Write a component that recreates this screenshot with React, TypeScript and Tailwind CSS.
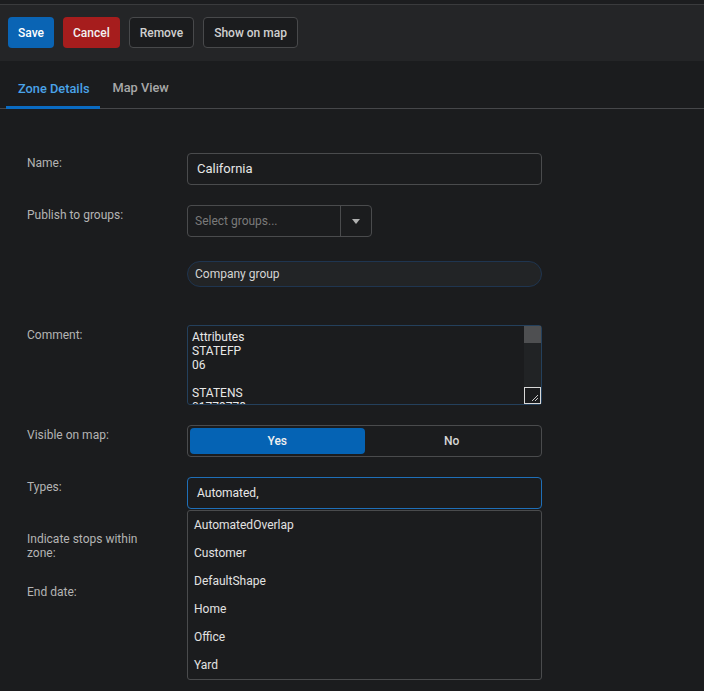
import React from "react";

const types = ["AutomatedOverlap", "Customer", "DefaultShape", "Home", "Office", "Yard"];

function Label({ children }: { children: React.ReactNode }) {
  return (
    <div className="w-[160px] shrink-0 pt-[3px] pr-6 text-[12px] leading-[14px] text-[#b4b4b4]">
      {children}
    </div>
  );
}

export default function App() {
  return (
    <div
      className="min-h-[691px] w-[704px] overflow-hidden bg-[#1b1c1e] text-[#e2e2e2]"
      style={{ fontFamily: "Roboto, 'Liberation Sans', sans-serif" }}
    >
      {/* toolbar */}
      <div className="h-[4px] bg-[#1c1d1f]" />
      <div className="flex h-[57px] items-start gap-[9px] border-t border-[#3a3b3d] bg-[#242527] px-[8px] pt-[12px]">
        <button className="h-[31px] rounded-[4px] bg-[#0a64b4] px-[10px] text-[12px] font-medium text-white">
          Save
        </button>
        <button className="h-[31px] rounded-[4px] bg-[#a61d1d] px-[10px] text-[12px] font-medium text-[#f2f2f2]">
          Cancel
        </button>
        <button className="h-[31px] rounded-[4px] border border-[#48494b] bg-[#1b1c1e] px-[10px] text-[12px] font-medium text-[#d0d0d0]">
          Remove
        </button>
        <button className="h-[31px] rounded-[4px] border border-[#48494b] bg-[#1b1c1e] px-[10px] text-[12px] font-medium text-[#d0d0d0]">
          Show on map
        </button>
      </div>

      {/* tabs */}
      <div className="flex h-[48px] items-end border-b border-[#46474a] px-[6px]">
        <div className="-mb-px flex h-full items-center border-b-[3px] border-[#0a6bc2] pl-[12px] pr-[11px] pt-[9px] text-[12.8px] font-medium text-[#4aa3e8]">
          Zone Details
        </div>
        <div className="flex h-full items-center px-[12px] pt-[6px] text-[12.8px] font-medium text-[#a8a8a8]">
          Map View
        </div>
      </div>

      {/* form */}
      <div className="flex flex-col pl-[27px] pt-[44px]">
        <div className="flex">
          <Label>Name:</Label>
          <div className="flex h-[32px] w-[355px] items-center rounded-[4px] border border-[#4a4b4d] px-[9px] text-[13px] text-[#e6e6e6]">
            California
          </div>
        </div>

        <div className="mt-[20px] flex">
          <Label>Publish to groups:</Label>
          <div className="flex h-[32px] w-[185px] rounded-[4px] border border-[#4a4b4d]">
            <div className="flex flex-1 items-center px-[7px] text-[12px] text-[#7a7a7a]">Select groups...</div>
            <div className="flex w-[31px] items-center justify-center border-l border-[#4a4b4d]">
              <svg width="8" height="5" viewBox="0 0 8 5">
                <path d="M0 0h8L4 5z" fill="#b0b0b0" />
              </svg>
            </div>
          </div>
        </div>

        <div className="mt-[24px] flex">
          <div className="w-[160px] shrink-0" />
          <div className="flex h-[26px] w-[355px] items-center rounded-full border border-[#1f3550] bg-[#222426] px-[7px] text-[12px] text-[#d4d4d4]">
            Company group
          </div>
        </div>

        <div className="mt-[38px] flex">
          <Label>Comment:</Label>
          <div className="relative h-[80px] w-[355px] rounded-[3px] border border-[#24405c] bg-[#1b1c1e]">
            <div className="h-full overflow-hidden pl-[4px] pr-[20px] pt-[4px] text-[12px] leading-[14px] text-[#e8e8e8]">
              <div>Attributes</div>
              <div>STATEFP</div>
              <div>06</div>
              <div>&nbsp;</div>
              <div>STATENS</div>
              <div>01779778</div>
            </div>
            <div className="absolute right-0 top-0 flex h-full w-[17px] flex-col bg-[#212325]">
              <div className="h-[17px] bg-[#4e4f51]" />
              <div className="flex-1" />
              <div className="relative h-[17px] border border-[#d8d8d8] bg-[#1b1c1e]">
                <svg className="absolute bottom-[1px] right-[1px]" width="9" height="9" viewBox="0 0 9 9">
                  <path d="M8 2L2 8M8 5L5 8" stroke="#c8c8c8" strokeWidth="1" />
                </svg>
              </div>
            </div>
          </div>
        </div>

        <div className="mt-[20px] flex">
          <Label>Visible on map:</Label>
          <div className="flex h-[32px] w-[355px] rounded-[4px] border border-[#4a4b4d] p-[2px]">
            <div className="flex flex-1 items-center justify-center rounded-[4px] bg-[#0563b4] text-[12px] font-medium text-[#f0f0f0]">
              Yes
            </div>
            <div className="flex flex-1 items-center justify-center text-[12px] font-medium text-[#d6d6d6]">
              No
            </div>
          </div>
        </div>

        <div className="mt-[20px] flex">
          <div className="flex w-[160px] shrink-0 flex-col">
            <Label>Types:</Label>
            <div className="mt-[38px] w-[160px] pr-6 text-[12px] leading-[14px] text-[#b4b4b4]">
              Indicate stops within zone:
            </div>
            <div className="mt-[25px] text-[12px] leading-[14px] text-[#b4b4b4]">End date:</div>
          </div>
          <div className="relative w-[355px]">
            <div className="flex h-[32px] items-center rounded-[4px] border border-[#1f6fb8] px-[9px] text-[12px] text-[#e8e8e8]">
              Automated,
            </div>
            <div className="mt-[1px] flex flex-col rounded-[3px] border border-[#4a4b4d] bg-[#1b1c1e]">
              {types.map((t) => (
                <div key={t} className="flex h-[28px] items-center px-[6px] text-[12px] text-[#e2e2e2]">
                  {t}
                </div>
              ))}
            </div>
          </div>
        </div>
      </div>
    </div>
  );
}
